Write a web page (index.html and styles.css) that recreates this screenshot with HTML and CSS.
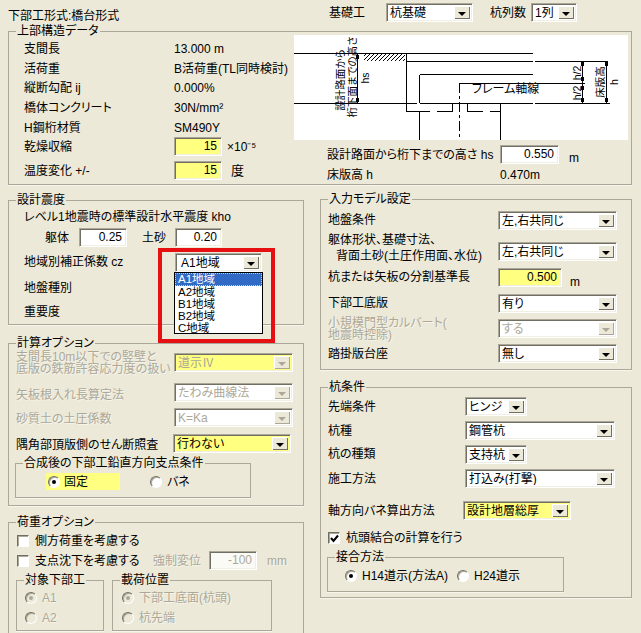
FILE: index.html
```html
<!DOCTYPE html>
<html lang="ja">
<head>
<meta charset="utf-8">
<title>下部工形式</title>
<link rel="stylesheet" href="styles.css">
</head>
<body>
<div class="page">
  <header class="head">
    <div class="title">下部工形式:橋台形式</div>
    <div class="head-controls">
      <span class="head-l1">基礎工</span>
      <div class="combo w87"><span class="val">杭基礎</span><span class="btn"></span></div>
      <span class="head-l2">杭列数</span>
      <div class="combo w46"><span class="val">1列</span><span class="btn"></span></div>
    </div>
  </header>

  <section class="group top-group">
    <span class="legend">上部構造データ</span>
    <div class="top-left">
      <div class="row"><span class="lbl l150">支間長</span><span>13.000 m</span></div>
      <div class="row"><span class="lbl l150">活荷重</span><span>B活荷重(TL同時検討)</span></div>
      <div class="row"><span class="lbl l150">縦断勾配 ij</span><span>0.000%</span></div>
      <div class="row"><span class="lbl l150">橋体コンクリート</span><span>30N/mm²</span></div>
      <div class="row"><span class="lbl l150">H鋼桁材質</span><span>SM490Y</span></div>
      <div class="row"><span class="lbl l150">乾燥収縮</span><div class="field yellow w48">15</div><span class="unit-x">×10⁻⁵</span></div>
      <div class="row"><span class="lbl l150">温度変化 +/-</span><div class="field yellow w48">15</div><span class="unit-d">度</span></div>
    </div>
    <div class="top-right">
      <svg class="diagram" width="334" height="105" viewBox="294 35 334 105">
        <defs>
          <pattern id="hatch" width="4" height="4" patternUnits="userSpaceOnUse">
            <path d="M-1 5L5 -1" stroke="#000" stroke-width="1"/>
          </pattern>
        </defs>
        <rect x="364" y="54" width="41" height="7" fill="url(#hatch)"/>
        <path class="ln" d="M294 53.5H533M406.5 53.5V111.5M406.5 61.5H533M535 61.5H608M419.5 74.5H533M419.5 74.5V103M419.5 112V140M459 83.5H533M535 83.5H585M294 103.5H417M420 103.5H533M535 103.5H610M406 111.5H430M437 111.5H452.5V103M467.5 103V111.5H483M490 111.5H500.5M500.5 103V140M357.5 53V103M582.5 61V103M606.5 61V103"/>
        <path class="ln dash" d="M459.5 83V140"/>
        <path class="tick" d="M356 55h3v4h-3zM356 98h3v4h-3zM581 62h3v4h-3zM581 77h3v4h-3zM581 86h3v4h-3zM581 98h3v4h-3zM605 62h3v4h-3zM605 98h3v4h-3z"/>
        <text class="small" x="344" y="80" text-anchor="middle" transform="rotate(-90 344 80)">設計路面から</text>
        <text class="small" x="356" y="77" text-anchor="middle" transform="rotate(-90 356 77)">桁下面までの高さ</text>
        <text class="small" x="369" y="78" text-anchor="middle" transform="rotate(-90 369 78)">hs</text>
        <text x="472" y="93">フレーム軸線</text>
        <text class="small" x="581" y="73" text-anchor="middle" transform="rotate(-90 581 73)">h/2</text>
        <text class="small" x="581" y="93" text-anchor="middle" transform="rotate(-90 581 93)">h/2</text>
        <text class="small" x="604" y="82" text-anchor="middle" transform="rotate(-90 604 82)">床版高</text>
        <text class="small" x="618" y="82" text-anchor="middle" transform="rotate(-90 618 82)">h</text>
      </svg>
      <div class="hs-row">
        <span class="hs-label">設計路面から桁下までの高さ hs</span>
        <div class="field w59">0.550</div>
        <span class="hs-unit">m</span>
      </div>
      <div class="h-row"><span class="hs-label">床版高 h</span><span>0.470m</span></div>
    </div>
  </section>

  <div class="columns">
    <div class="col-left">
      <section class="group seismic">
        <span class="legend">設計震度</span>
        <div class="row">レベル1地震時の標準設計水平震度 kho</div>
        <div class="row">
          <span class="body-l">躯体</span><div class="field w48">0.25</div>
          <span class="soil-l">土砂</span><div class="field w47">0.20</div>
        </div>
        <div class="row">
          <span class="lbl l151">地域別補正係数 cz</span>
          <div class="anchor">
            <div class="combo w87"><span class="val pad">A1地域</span><span class="btn"></span></div>
            <ul class="list">
              <li class="sel">A1地域</li>
              <li>A2地域</li>
              <li>B1地域</li>
              <li>B2地域</li>
              <li>C地域</li>
            </ul>
            <div class="redbox"></div>
          </div>
        </div>
        <div class="row">地盤種別</div>
        <div class="row">重要度</div>
      </section>

      <section class="group calc">
        <span class="legend">計算オプション</span>
        <div class="row">
          <span class="lbl l158 off two">支間長10m以下での竪壁と<br>底版の鉄筋許容応力度の扱い</span>
          <div class="combo w119 yellow disabled"><span class="val">道示Ⅳ</span><span class="btn"></span></div>
        </div>
        <div class="row">
          <span class="lbl l158 off low">矢板根入れ長算定法</span>
          <div class="combo w119 disabled"><span class="val">たわみ曲線法</span><span class="btn"></span></div>
        </div>
        <div class="row">
          <span class="lbl l158 off low">砂質土の土圧係数</span>
          <div class="combo w119 disabled"><span class="val">K=Ka</span><span class="btn"></span></div>
        </div>
        <div class="row">
          <span class="lbl l157 low">隅角部頂版側のせん断照査</span>
          <div class="combo w118 yellow"><span class="val">行わない</span><span class="btn"></span></div>
        </div>
        <div class="group sub support">
          <span class="legend">合成後の下部工鉛直方向支点条件</span>
          <div class="radio-line">
            <span class="fixed"><i class="radio on"></i>固定</span>
            <span class="spring"><i class="radio"></i>バネ</span>
          </div>
        </div>
      </section>

      <section class="group load">
        <span class="legend">荷重オプション</span>
        <div class="row"><i class="check"></i>側方荷重を考慮する</div>
        <div class="row">
          <i class="check"></i><span class="chk-l">支点沈下を考慮する</span>
          <span class="off disp-l">強制変位</span>
          <div class="field w48 disabled-field">-100</div>
          <span class="off disp-u">mm</span>
        </div>
        <div class="load-subs">
          <div class="group sub target">
            <span class="legend">対象下部工</span>
            <div class="opt off"><i class="radio on dis"></i>A1</div>
            <div class="opt off"><i class="radio dis"></i>A2</div>
          </div>
          <div class="group sub position">
            <span class="legend">載荷位置</span>
            <div class="opt off"><i class="radio on dis"></i>下部工底面(杭頭)</div>
            <div class="opt off"><i class="radio dis"></i>杭先端</div>
          </div>
        </div>
      </section>
    </div>

    <div class="col-right">
      <section class="group model">
        <span class="legend">入力モデル設定</span>
        <div class="row"><span class="lbl l170">地盤条件</span><div class="combo w119"><span class="val">左,右共同じ</span><span class="btn"></span></div></div>
        <div class="row"><span class="lbl l170 shape">躯体形状、基礎寸法、<br><span class="indent">背面土砂(土圧作用面、水位)</span></span><div class="combo w119"><span class="val">左,右共同じ</span><span class="btn"></span></div></div>
        <div class="row"><span class="lbl l170">杭または矢板の分割基準長</span><div class="field yellow w64">0.500</div><span class="m-unit">m</span></div>
        <div class="row"><span class="lbl l170">下部工底版</span><div class="combo w119"><span class="val">有り</span><span class="btn"></span></div></div>
        <div class="row"><span class="lbl l170 off two">小規模門型カルバート(<br>地震時控除)</span><div class="combo w119 disabled"><span class="val">する</span><span class="btn"></span></div></div>
        <div class="row"><span class="lbl l170">踏掛版台座</span><div class="combo w119"><span class="val">無し</span><span class="btn"></span></div></div>
      </section>

      <section class="group pile">
        <span class="legend">杭条件</span>
        <div class="row"><span class="lbl l137">先端条件</span><div class="combo w62"><span class="val">ヒンジ</span><span class="btn"></span></div></div>
        <div class="row"><span class="lbl l137">杭種</span><div class="combo w150"><span class="val">鋼管杭</span><span class="btn"></span></div></div>
        <div class="row"><span class="lbl l137">杭の種類</span><div class="combo w62"><span class="val">支持杭</span><span class="btn"></span></div></div>
        <div class="row"><span class="lbl l137">施工方法</span><div class="combo w150"><span class="val">打込み(打撃)</span><span class="btn"></span></div></div>
        <div class="row"><span class="lbl l135">軸方向バネ算出方法</span><div class="combo w108 yellow"><span class="val">設計地層総厚</span><span class="btn"></span></div></div>
        <div class="row"><i class="check checked"><svg width="9" height="9" viewBox="0 0 9 9"><path d="M1 4l2.5 3L8 1.5" fill="none" stroke="#000" stroke-width="2"/></svg></i>杭頭結合の計算を行う</div>
        <div class="group sub joint">
          <span class="legend">接合方法</span>
          <div class="radio-line">
            <span class="h14"><i class="radio on"></i>H14道示(方法A)</span>
            <span class="h24"><i class="radio"></i>H24道示</span>
          </div>
        </div>
      </section>
    </div>
  </div>
</div>
</body>
</html>
```
FILE: styles.css
```css
* { box-sizing: border-box; }
html, body { margin: 0; padding: 0; background: #ece9d8; }
body {
  font-family: "Liberation Sans", "Noto Sans CJK JP", sans-serif;
  font-size: 12px;
  line-height: 14px;
  color: #000;
  font-feature-settings: "palt";
}
.page { width: 641px; height: 633px; overflow: hidden; padding: 0 9px 0 8px; }

/* header */
.head { display: flex; height: 31px; }
.title { width: 321px; align-self: center; }
.head-controls { display: flex; align-items: center; height: 19px; margin-top: 3px; }
.head-l1 { width: 57px; }
.head-l2 { width: 41px; margin-left: 17px; }

/* groups */
.group { position: relative; border: 1px solid #aca899; box-shadow: 0 1px 0 #f8f6ec; }
.legend {
  position: absolute; left: 7px; top: -8px; height: 14px; padding: 0 1px;
  background: #ece9d8; white-space: nowrap;
}
.row { display: flex; align-items: center; white-space: nowrap; min-width: 0; }
.lbl { flex: none; }
.l135 { width: 135px; } .l137 { width: 137px; } .l150 { width: 150px; }
.l151 { width: 151px; } .l157 { width: 157px; } .l158 { width: 158px; }
.l170 { width: 170px; }
.off { color: #aca899; text-shadow: 1px 1px 0 #f7f5ea; }
.two { line-height: 12px; }
.low { margin-top: 4px; }

/* fields and combos */
.w46 { width: 46px; } .w47 { width: 47px; } .w48 { width: 48px; } .w59 { width: 59px; }
.w62 { width: 62px; } .w64 { width: 64px; } .w87 { width: 87px; } .w108 { width: 108px; }
.w118 { width: 118px; } .w119 { width: 119px; } .w150 { width: 150px; }

.field, .combo {
  flex: none; height: 19px; background: #fff;
  border: 1px solid; border-color: #aca899 #fff #fff #aca899;
  box-shadow: inset 1px 1px 0 #716f64, inset -1px -1px 0 #f1efe2;
}
.field { padding: 1px 4px 0 0; text-align: right; line-height: 15px; }
.combo { display: flex; padding: 2px 2px 2px 2px; line-height: 14px; }
.yellow { background: #ffff80; }
.val { flex: 1; padding-left: 1px; overflow: hidden; white-space: nowrap; }
.val.pad { padding-left: 3px; }
.btn {
  flex: none; position: relative; width: 16px; background: #ece9d8;
  box-shadow: inset 1px 1px 0 #fff, inset -1px -1px 0 #716f64;
}
.btn::after {
  content: ""; position: absolute; left: 4px; top: 6px;
  border: 4px solid transparent; border-top-color: #000; border-bottom: 0;
}
.disabled { color: #aca899; }
.disabled .btn { box-shadow: inset 1px 1px 0 #fff, inset -1px -1px 0 #aca899; }
.disabled .btn::after { border-top-color: #aca899; }
.disabled-field { background: #fafaf6; color: #aca899; }

/* top group */
.top-group { display: flex; height: 154px; }
.top-left {
  width: 285px; padding: 7px 0 0 15px; display: grid;
  grid-template-rows: 20px 19px 20px 20px 19px 19px 29px; align-content: start;
}
.unit-x { margin-left: 5px; }
.unit-d { margin-left: 9px; font-size: 13px; }
.top-right { padding-top: 3px; width: 334px; }
.diagram { display: block; background: #fff; }
.diagram text { font-size: 12px; fill: #000; }
.diagram text.small { font-size: 10.5px; }
.ln { fill: none; stroke: #000; stroke-width: 1; shape-rendering: crispEdges; }
.dash { stroke-dasharray: 10 3 3 3; }
.tick { fill: #000; }
.hs-row { display: flex; align-items: center; height: 19px; margin-top: 5px; padding-left: 33px; }
.hs-label { width: 173px; flex: none; white-space: nowrap; }
.hs-unit { margin: 6px 0 0 10px; }
.h-row { display: flex; align-items: center; height: 16px; margin-top: 3px; padding-left: 33px; }

/* columns */
.columns { display: grid; grid-template-columns: 296px 312px; column-gap: 16px; padding-top: 14px; }
.col-left { padding-top: 1px; }

.seismic {
  height: 125px; padding: 6px 0 0 15px; display: grid;
  grid-template-rows: 20px 21px 28px 24px 24px; align-content: start; z-index: 3;
}
.body-l { width: 34px; margin-left: 21px; }
.soil-l { width: 33px; margin-left: 15px; }
.anchor { position: relative; }
.list {
  position: absolute; left: -1px; top: 19px; width: 89px; height: 62px; margin: 0; padding: 0;
  list-style: none; background: #fff; border: 1px solid #000; font-size: 11.5px; line-height: 12px;
}
.list li { height: 12px; padding-left: 3px; }
.list .sel { background: #316ac5; color: #fff; outline: 1px dotted #c8d4ea; outline-offset: -1px; height: 13px; }
.redbox {
  position: absolute; left: -17px; top: -5px; width: 117px; height: 95px;
  border: 4px solid #e60f12;
}

.calc {
  height: 163px; margin-top: 18px; padding: 4px 0 0 7px; display: grid;
  grid-template-rows: 29px 31px 18px 34px auto; align-content: start;
}
.calc .row { align-items: center; }
.support { width: 236px; height: 35px; margin: 3px 0 0 -1px; }
.radio-line { display: flex; align-items: center; height: 100%; padding-top: 2px; }
.fixed { display: flex; align-items: center; gap: 4px; width: 74px; height: 17px; margin-left: 30px; padding-left: 2px; background: #ffff80; }
.spring { display: flex; align-items: center; gap: 5px; margin-left: 30px; }

.radio {
  position: relative; display: inline-block; flex: none; width: 12px; height: 12px; border-radius: 50%;
  background: #fff; border: 1px solid; border-color: #716f64 #fff #fff #716f64;
  box-shadow: inset 1px 1px 0 #aca899;
}
.radio.on::after {
  content: ""; position: absolute; left: 3px; top: 3px; width: 4px; height: 4px;
  border-radius: 50%; background: #000;
}
.radio.dis { background: #ece9d8; }
.radio.dis.on::after { background: #aca899; }
.check {
  display: inline-flex; align-items: center; justify-content: center; flex: none;
  width: 12px; height: 12px; margin-right: 6px; background: #fff;
  border: 1px solid; border-color: #716f64 #fff #fff #716f64;
  box-shadow: inset 1px 1px 0 #aca899;
}

.load {
  height: 125px; margin-top: 16px; padding: 8px 0 0 8px; display: grid;
  grid-template-rows: 20px 19px auto; align-content: start;
}
.chk-l { width: 118px; flex: none; }
.disp-l { width: 56px; flex: none; }
.disp-u { margin-left: 10px; }
.load-subs { display: flex; gap: 8px; margin: 10px 0 0 -1px; }
.target { width: 88px; height: 51px; padding: 7px 0 0 8px; }
.position { width: 160px; height: 51px; padding: 7px 0 0 9px; }
.opt { display: flex; align-items: center; gap: 5px; height: 20px; white-space: nowrap; }

.model {
  height: 171px; padding: 1px 0 0 7px; display: grid;
  grid-template-rows: 38px 25px 26px 26px 25px 25px; align-content: start;
}
.shape { line-height: 16px; margin-bottom: 7px; }
.indent { padding-left: 8px; }
.m-unit { margin: 9px 0 0 8px; }

.pile {
  height: 211px; margin-top: 17px; padding: 7px 0 0 7px; display: grid;
  grid-template-rows: 23px 25px 22px 27px 37px 18px auto; align-content: start;
}
.joint { width: 237px; height: 35px; margin: 10px 0 0 -1px; }
.h14 { display: flex; align-items: center; gap: 5px; width: 112px; margin-left: 17px; }
.h24 { display: flex; align-items: center; gap: 5px; }
```
